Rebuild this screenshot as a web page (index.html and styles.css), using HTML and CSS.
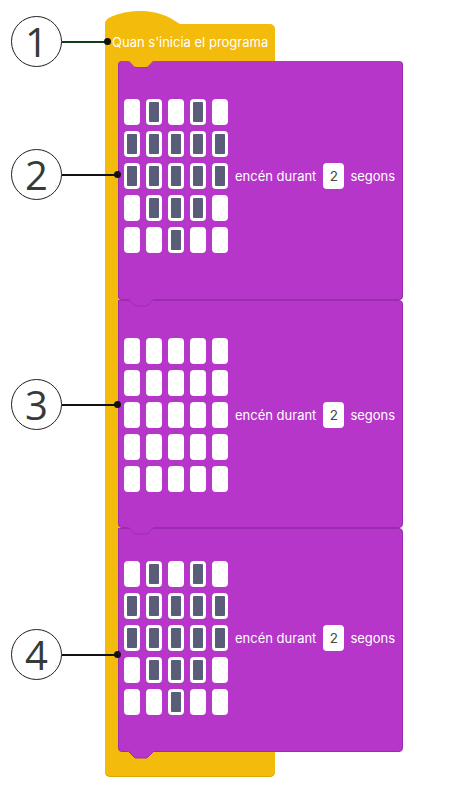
FILE: index.html
```html
<!DOCTYPE html>
<html lang="ca">
<head>
<meta charset="utf-8">
<title>Quan s'inicia el programa</title>
<link rel="stylesheet" href="styles.css">
</head>
<body>
<div class="stage">
  <div class="event">
    <svg class="hat" width="75" height="14" viewBox="0 0 75 14"><path d="M0 14 V12 C0 6 18 0 36 0 C52 0 63 5 75 13 V14 Z" fill="#f3bb0b"/></svg>
    <div class="event-body">
      <div class="event-label">Quan s'inicia el programa</div>
      <div class="stack">
        <div class="block b1">
          <svg class="notch" width="26" height="8" viewBox="0 0 26 8"><path d="M0 0 L6 6 Q7 7 8 7 H18 Q19 7 20 6 L26 0 Z" fill="#f3bb0b"/><path d="M0.5 0 L6 5.8 Q7 6.6 8 6.6 H18 Q19 6.6 20 5.8 L25.5 0" fill="none" stroke="#9b2bb0" stroke-width="1"/></svg>
          <div class="leds">
            <span class="led"></span><span class="led on"></span><span class="led"></span><span class="led on"></span><span class="led"></span>
            <span class="led on"></span><span class="led on"></span><span class="led on"></span><span class="led on"></span><span class="led on"></span>
            <span class="led on"></span><span class="led on"></span><span class="led on"></span><span class="led on"></span><span class="led on"></span>
            <span class="led"></span><span class="led on"></span><span class="led on"></span><span class="led on"></span><span class="led"></span>
            <span class="led"></span><span class="led"></span><span class="led on"></span><span class="led"></span><span class="led"></span>
          </div>
          <div class="label"><span>encén durant</span><span class="num">2</span><span>segons</span></div>
          <svg class="tab" width="26" height="8" viewBox="0 0 26 8"><path d="M0 0 L6 6 Q7 7 8 7 H18 Q19 7 20 6 L26 0 Z" fill="#b536c9"/><path d="M0.5 0.5 L6 6 Q7 7 8 7 H18 Q19 7 20 6 L25.5 0.5" fill="none" stroke="#9b2bb0" stroke-width="1"/></svg>
        </div>
        <div class="block b2">
          <div class="leds">
            <span class="led"></span><span class="led"></span><span class="led"></span><span class="led"></span><span class="led"></span>
            <span class="led"></span><span class="led"></span><span class="led"></span><span class="led"></span><span class="led"></span>
            <span class="led"></span><span class="led"></span><span class="led"></span><span class="led"></span><span class="led"></span>
            <span class="led"></span><span class="led"></span><span class="led"></span><span class="led"></span><span class="led"></span>
            <span class="led"></span><span class="led"></span><span class="led"></span><span class="led"></span><span class="led"></span>
          </div>
          <div class="label"><span>encén durant</span><span class="num">2</span><span>segons</span></div>
          <svg class="tab" width="26" height="8" viewBox="0 0 26 8"><path d="M0 0 L6 6 Q7 7 8 7 H18 Q19 7 20 6 L26 0 Z" fill="#b536c9"/><path d="M0.5 0.5 L6 6 Q7 7 8 7 H18 Q19 7 20 6 L25.5 0.5" fill="none" stroke="#9b2bb0" stroke-width="1"/></svg>
        </div>
        <div class="block b3">
          <div class="leds">
            <span class="led"></span><span class="led on"></span><span class="led"></span><span class="led on"></span><span class="led"></span>
            <span class="led on"></span><span class="led on"></span><span class="led on"></span><span class="led on"></span><span class="led on"></span>
            <span class="led on"></span><span class="led on"></span><span class="led on"></span><span class="led on"></span><span class="led on"></span>
            <span class="led"></span><span class="led on"></span><span class="led on"></span><span class="led on"></span><span class="led"></span>
            <span class="led"></span><span class="led"></span><span class="led on"></span><span class="led"></span><span class="led"></span>
          </div>
          <div class="label"><span>encén durant</span><span class="num">2</span><span>segons</span></div>
          <svg class="tab" width="26" height="8" viewBox="0 0 26 8"><path d="M0 0 L6 6 Q7 7 8 7 H18 Q19 7 20 6 L26 0 Z" fill="#b536c9"/><path d="M0.5 0.5 L6 6 Q7 7 8 7 H18 Q19 7 20 6 L25.5 0.5" fill="none" stroke="#9b2bb0" stroke-width="1"/></svg>
        </div>
      </div>
      <div class="event-foot"></div>
    </div>
  </div>

  <div class="callout c1"><span class="circle">1</span><span class="line"></span><span class="dot"></span></div>
  <div class="callout c2"><span class="circle">2</span><span class="line"></span><span class="dot"></span></div>
  <div class="callout c3"><span class="circle">3</span><span class="line"></span><span class="dot"></span></div>
  <div class="callout c4"><span class="circle">4</span><span class="line"></span><span class="dot"></span></div>
</div>
</body>
</html>
```

FILE: styles.css
```css
html, body {
  margin: 0;
  padding: 0;
  background: #ffffff;
}

body {
  font-family: Inter, "Noto Sans", "Liberation Sans", sans-serif;
}

.stage {
  position: relative;
  width: 449px;
  height: 805px;
  box-sizing: border-box;
  padding: 11px 0 0 105px;
}

.event {
  width: 170px;
}

.hat {
  display: block;
  margin-bottom: -1px;
}

.event-body {
  width: 170px;
  background: #f3bb0b;
  border-radius: 0 5px 5px 5px;
  box-shadow: inset 0 -1px 0 #dca90a;
}

.event-label {
  height: 37px;
  line-height: 37px;
  padding-left: 7px;
  color: #ffffff;
  font-size: 13px;
  white-space: nowrap;
}

.stack {
  margin-left: 13px;
  width: 285px;
}

.event-foot {
  height: 25px;
}

.block {
  position: relative;
  box-sizing: border-box;
  width: 285px;
  background: #b536c9;
  border: 1px solid #9b2bb0;
  border-radius: 4px;
  padding-left: 5px;
  display: flex;
  align-items: center;
  gap: 7px;
}

.b1 {
  height: 239px;
  padding-top: 37px;
  padding-bottom: 46px;
  border-top-color: #b536c9;
}

.b2 {
  height: 228px;
  padding-top: 37px;
  padding-bottom: 35px;
  border-radius: 0 4px 4px 4px;
}

.b3 {
  height: 224px;
  padding-top: 32px;
  padding-bottom: 36px;
  border-radius: 0 4px 4px 4px;
}

.notch {
  position: absolute;
  top: -1px;
  left: 9px;
}

.tab {
  position: absolute;
  left: 9px;
  bottom: -8px;
  z-index: 2;
}

.leds {
  display: grid;
  grid-template-columns: repeat(5, 16px);
  grid-auto-rows: 26px;
  column-gap: 6px;
  row-gap: 6px;
}

.led {
  display: block;
  background: #ffffff;
  border-radius: 4px;
}

.led.on {
  background: #595d78;
  box-shadow: inset 0 0 0 3px #ffffff;
}

.label {
  display: flex;
  align-items: center;
  gap: 6px;
  color: #ffffff;
  font-size: 13px;
  white-space: nowrap;
}

.num {
  width: 21px;
  height: 26px;
  line-height: 26px;
  text-align: center;
  background: #ffffff;
  border-radius: 4px;
  color: #3c4a40;
  font-size: 13.5px;
  margin: 0 0 0 1px;
}

.callout {
  position: absolute;
  left: 11px;
  display: flex;
  align-items: center;
}

.c1 { top: 16px; }
.c2 { top: 149px; }
.c3 { top: 379px; }
.c4 { top: 629px; }

.circle {
  box-sizing: border-box;
  width: 51px;
  height: 51px;
  border: 1.5px solid #1f1f1f;
  border-radius: 50%;
  display: flex;
  align-items: center;
  justify-content: center;
  font-family: "Open Sans", "Noto Sans", sans-serif;
  font-size: 40px;
  line-height: 1;
  color: #363b38;
  background: #ffffff;
}

.line {
  display: block;
  width: 55px;
  height: 2px;
  background: #111111;
}

.c1 .line {
  width: 45px;
  background: #0f3d1a;
}

.dot {
  display: block;
  width: 7px;
  height: 7px;
  margin-left: -3.5px;
  border-radius: 50%;
  background: #111111;
}
```
